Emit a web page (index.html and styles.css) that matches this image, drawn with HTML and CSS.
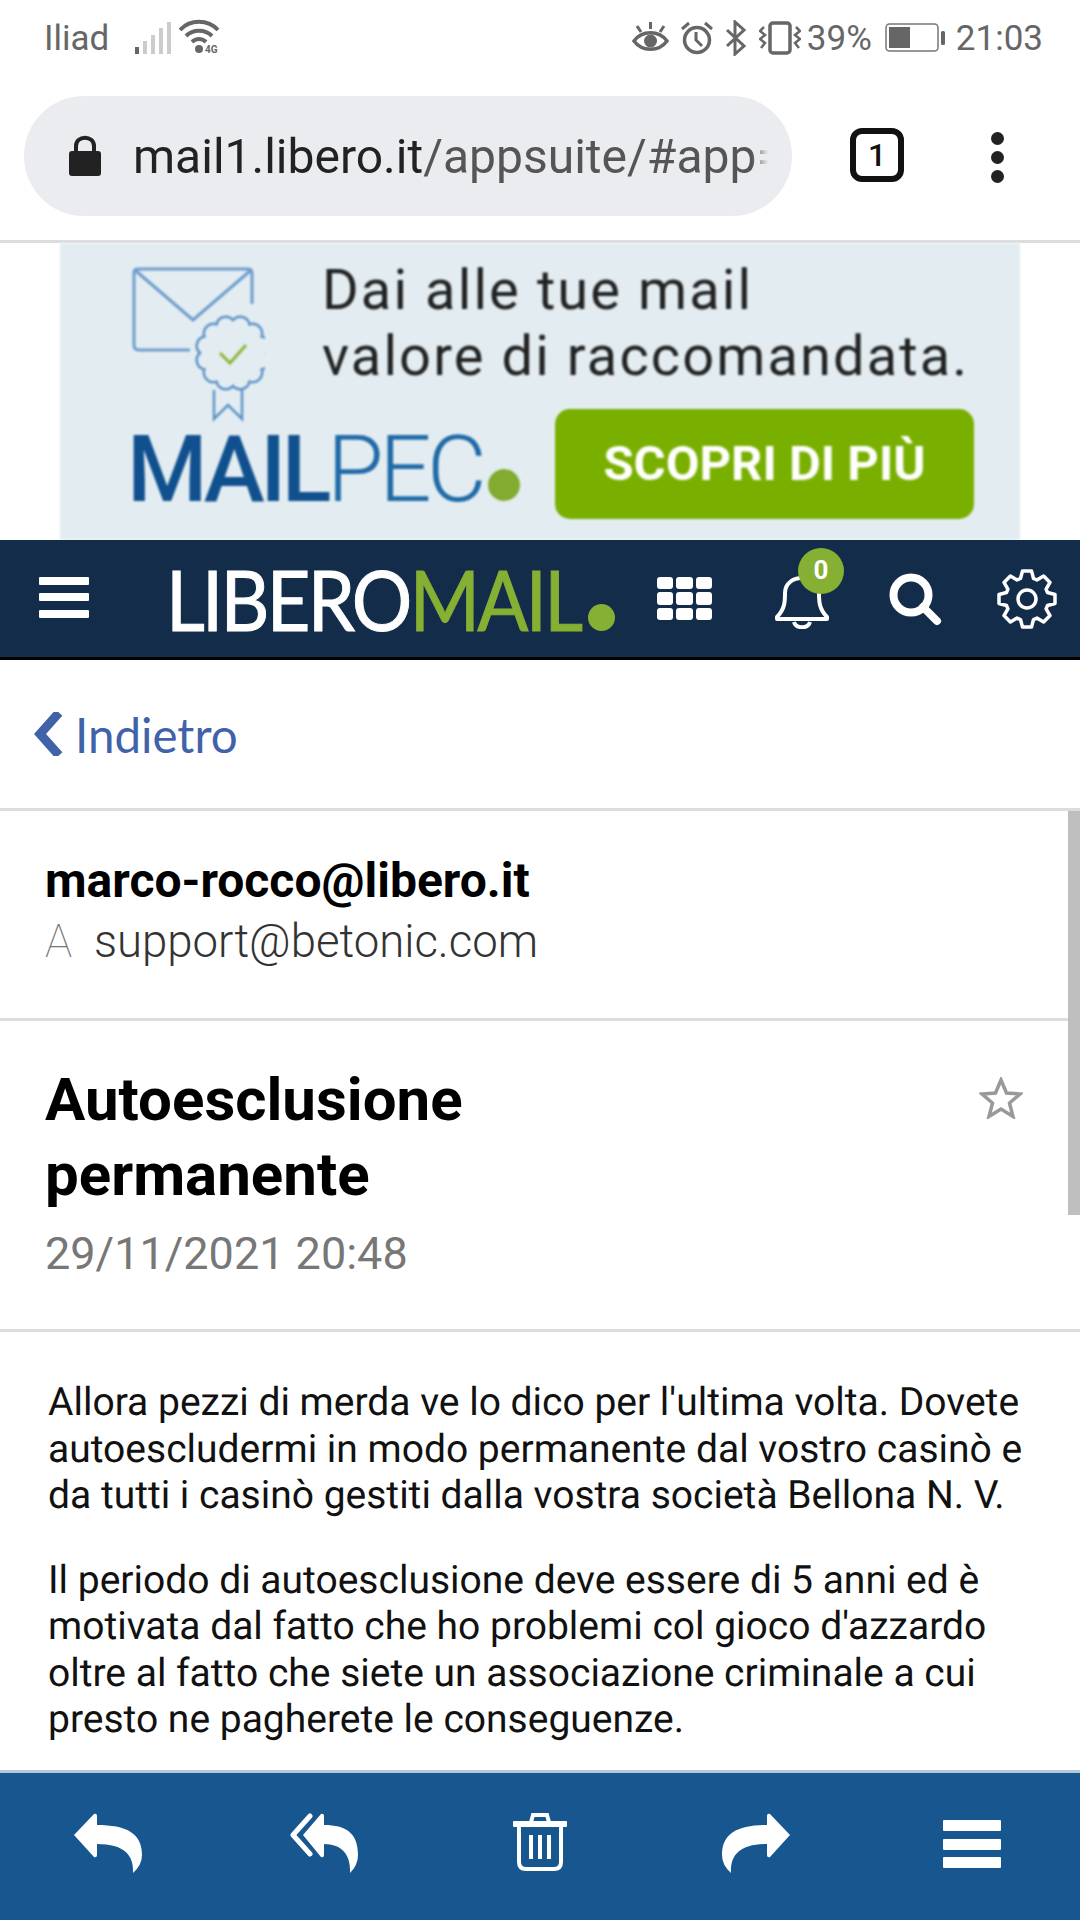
FILE: index.html
```html
<!doctype html>
<html lang="it">
<head>
    <meta charset="UTF-8">
    <meta name="viewport" content="width=device-width, initial-scale=1.0">
    <title>Autoesclusione permanente</title>
    <link rel="stylesheet" href="styles.css">
</head>
<body>
<div class="page">
    <!-- barra di stato -->
    <div class="status">
        <div class="status-left">
            <span class="carrier">Iliad</span>
            <svg class="ic-signal" width="36" height="34" viewBox="0 0 36 34">
                <rect x="0" y="26" width="4" height="7" fill="#666"/>
                <rect x="8" y="20" width="4" height="13" fill="#ccc"/>
                <rect x="16" y="14" width="4" height="19" fill="#ccc"/>
                <rect x="24" y="7" width="4" height="26" fill="#ccc"/>
                <rect x="32" y="1" width="4" height="32" fill="#ccc"/>
            </svg>
            <svg class="ic-wifi" width="44" height="38" viewBox="0 0 44 38">
                <g fill="none" stroke="#666" stroke-width="4">
                    <path d="M1 11C11 0 29 0 39 11"/>
                    <path d="M7 17C14 10 26 10 33 17"/>
                    <path d="M13 23C17 19 23 19 27 23"/>
                </g>
                <circle cx="20" cy="30" r="4" fill="#666"/>
                <text x="26" y="34" class="wifi-label">4G</text>
            </svg>
        </div>
        <div class="status-right">
            <svg width="37" height="34" viewBox="0 0 37 34">
                <path d="M2 20C10 9 27 9 35 20C27 31 10 31 2 20Z" fill="none" stroke="#666" stroke-width="3.5"/>
                <circle cx="18.500" cy="20" r="6.500" fill="#666"/>
                <path d="M18.500 1V8M5 5L9 11M32 5L28 11" stroke="#666" stroke-width="3" fill="none"/>
            </svg>
            <svg width="32" height="34" viewBox="0 0 32 34">
                <circle cx="16" cy="19" r="12.500" fill="none" stroke="#666" stroke-width="3.500"/>
                <path d="M15 11V19L21 25M1 8L8 2M31 8L24 2" fill="none" stroke="#666" stroke-width="3"/>
            </svg>
            <svg width="22" height="36" viewBox="0 0 22 36">
                <path d="M2 10L19 26L10 34V2L19 10L2 26" fill="none" stroke="#666" stroke-width="3"/>
            </svg>
            <svg width="42" height="34" viewBox="0 0 42 34">
                <rect x="11" y="2" width="20" height="30" rx="3" fill="none" stroke="#666" stroke-width="3.500"/>
                <path d="M5 6L1 10L6 14L1 18L6 22L2 27M37 6L41 10L36 14L41 18L36 22L40 27" fill="none" stroke="#666" stroke-width="2.500"/>
            </svg>
            <span class="percent">39%</span>
            <svg class="ic-battery" width="62" height="30" viewBox="0 0 62 30">
                <rect x="1" y="1" width="52" height="27" rx="3.500" fill="none" stroke="#777" stroke-width="1.500"/>
                <rect x="4" y="4" width="21" height="21" fill="#666"/>
                <rect x="56" y="8" width="4" height="14" rx="1.500" fill="#666"/>
            </svg>
            <span class="clock">21:03</span>
        </div>
    </div>

    <!-- barra indirizzi -->
    <div class="toolbar">
        <div class="urlbar">
            <svg class="ic-lock" width="34" height="42" viewBox="0 0 34 42">
                <path d="M8 18V11C8 0 26 0 26 11V18" fill="none" stroke="#222" stroke-width="4"/>
                <rect x="1" y="16" width="32" height="25" rx="3" fill="#222"/>
            </svg>
            <div class="url"><span class="url-host">mail1.libero.it</span>/appsuite/#app=</div>
        </div>
        <div class="tabs">1</div>
        <div class="dots"><i></i><i></i><i></i></div>
    </div>

    <!-- banner pubblicitario -->
    <div class="banner">
        <div class="banner-top">
            <svg class="banner-art" width="135" height="158" viewBox="0 0 135 158">
                <path d="M60 84H9Q4 84 4 79V7Q4 3 8 3H118Q122 3 122 7V38M6 5L63 54L120 5" fill="none" stroke="#6d9ccc" stroke-width="3"/>
                <path transform="translate(103 87)" d="M33 0A9.500 9.500 0 0 1 28.600 16.500A9.500 9.500 0 0 1 16.500 28.600A9.500 9.500 0 0 1 0 33A9.500 9.500 0 0 1 -16.500 28.600A9.500 9.500 0 0 1 -28.600 16.500A9.500 9.500 0 0 1 -33 0A9.500 9.500 0 0 1 -28.600 -16.500A9.500 9.500 0 0 1 -16.500 -28.600A9.500 9.500 0 0 1 0 -33A9.500 9.500 0 0 1 16.500 -28.600A9.500 9.500 0 0 1 28.600 -16.500A9.500 9.500 0 0 1 33 0Z" fill="#e3edf1" stroke="#5d93c8" stroke-width="2.500"/>
                <path d="M90 87L100 97L116 79" fill="none" stroke="#8bb63a" stroke-width="3"/>
                <path d="M84 124V153L98 139L112 153V124" fill="none" stroke="#5d93c8" stroke-width="2.500"/>
            </svg>
            <div class="banner-copy">Dai alle tue mail<br>valore di raccomandata.</div>
        </div>
        <div class="banner-bottom">
            <div class="mailpec"><b>MAIL</b>PEC<i></i></div>
            <div class="banner-btn">SCOPRI DI PIÙ</div>
        </div>
    </div>

    <!-- navigazione libero -->
    <nav class="topnav">
        <div class="burger"><i></i><i></i><i></i></div>
        <div class="logo">
            <div class="logo-text">LIBERO<span>MAIL</span></div>
            <i></i>
        </div>
        <div class="apps">
            <i></i><i></i><i></i><i></i><i></i><i></i><i></i><i></i><i></i>
        </div>
        <div class="bell">
            <svg width="54" height="60" viewBox="0 0 54 60">
                <path d="M2 48C10 40 10 32 10 24C10 4 44 4 44 24C44 32 44 40 52 48V50H2Z" fill="none" stroke="#fff" stroke-width="4" stroke-linejoin="round"/>
                <path d="M19 53C21 60 33 60 35 53" fill="none" stroke="#fff" stroke-width="4"/>
            </svg>
            <span class="badge">0</span>
        </div>
        <svg class="ic-search" width="54" height="54" viewBox="0 0 54 54">
            <circle cx="23" cy="23" r="17.500" fill="none" stroke="#fff" stroke-width="8"/>
            <path d="M35 35L49 49" stroke="#fff" stroke-width="8" stroke-linecap="round"/>
        </svg>
        <svg class="ic-gear" width="60" height="60" viewBox="0 0 60 60">
            <polygon points="23.500,9.500 25.500,2 34.500,2 36.500,9.500 39.900,10.900 46.600,7 53,13.400 49.100,20.100 50.500,23.500 58,25.500 58,34.500 50.500,36.500 49.100,39.900 53,46.600 46.600,53 39.900,49.100 36.500,50.500 34.500,58 25.500,58 23.500,50.500 20.100,49.100 13.400,53 7,46.600 10.900,39.900 9.500,36.500 2,34.500 2,25.500 9.500,23.500 10.900,20.100 7,13.400 13.400,7 20.100,10.900" fill="none" stroke="#fff" stroke-width="3.500" stroke-linejoin="round"/>
            <circle cx="30" cy="30" r="9" fill="none" stroke="#fff" stroke-width="3.500"/>
        </svg>
    </nav>

    <div class="back">
        <svg width="30" height="44" viewBox="0 0 30 44">
            <path d="M22 4L6 22L22 40" fill="none" stroke="#3f62a9" stroke-width="9" stroke-linecap="square"/>
        </svg>
        <span>Indietro</span>
    </div>

    <div class="mail">
        <div class="thumb"></div>

        <div class="sender">
            <div class="from">marco-rocco@libero.it</div>
            <div class="to"><span class="to-label">A</span>support@betonic.com</div>
        </div>

        <div class="subject">
            <div>
                <h1>Autoesclusione permanente</h1>
                <div class="date">29/11/2021 20:48</div>
            </div>
            <svg class="ic-star" width="44" height="42" viewBox="0 0 44 42">
                <path d="M22 3L27.500 16L41 17L30.500 26L34 39.500L22 32L10 39.500L13.500 26L3 17L16.500 16Z" fill="none" stroke="#999" stroke-width="3.500"/>
            </svg>
        </div>

        <div class="message">
            <p>Allora pezzi di merda ve lo dico per l'ultima volta. Dovete autoescludermi in modo permanente dal vostro casinò e da tutti i casinò gestiti dalla vostra società Bellona N. V.</p>
            <p>Il periodo di autoesclusione deve essere di 5 anni ed è motivata dal fatto che ho problemi col gioco d'azzardo oltre al fatto che siete un associazione criminale a cui presto ne pagherete le conseguenze.</p>
        </div>
    </div>

    <!-- azioni -->
    <div class="actions">
        <svg width="68" height="60" viewBox="0 0 68 60">
            <path d="M0 22L20 1Q23 0 23 3V12C52 12 68 20 68 42Q68 52 59 60C60 42 50 31 23 31V42Q23 45 20 44Z" fill="#fff"/>
        </svg>
        <svg width="68" height="60" viewBox="0 0 68 60">
            <path d="M20 3L3 22L20 41" fill="none" stroke="#fff" stroke-width="5" stroke-linejoin="round" stroke-linecap="round"/>
            <path d="M13 22L31 1Q34 0 34 3V12C56 12 68 20 68 42Q68 52 60 60C61 42 52 31 34 31V42Q34 45 31 44Z" fill="#fff"/>
        </svg>
        <svg width="54" height="58" viewBox="0 0 54 58">
            <path d="M18 9L20 2H34L36 9" fill="none" stroke="#fff" stroke-width="4"/>
            <rect x="0" y="8" width="54" height="6" rx="1" fill="#fff"/>
            <path d="M6 13V49Q6 56 13 56H41Q48 56 48 49V13" fill="none" stroke="#fff" stroke-width="4"/>
            <path d="M18 22V46M27 22V46M36 22V46" stroke="#fff" stroke-width="4" fill="none"/>
        </svg>
        <svg width="68" height="60" viewBox="0 0 68 60">
            <path d="M68 22L48 1Q45 0 45 3V12C16 12 0 20 0 42Q0 52 9 60C8 42 18 31 45 31V42Q45 45 48 44Z" fill="#fff"/>
        </svg>
        <div class="action-menu"><i></i><i></i><i></i></div>
    </div>
</div>
</body>
</html>
```

FILE: styles.css
```css
* {
    margin: 0;
    padding: 0;
    box-sizing: border-box;
}

body {
    font-family: Roboto, "Liberation Sans", sans-serif;
    background: #fff;
}

i {
    display: block;
}

.page {
    width: 1080px;
    height: 1920px;
    display: flex;
    flex-direction: column;
    overflow: hidden;
}

/* status */
.status {
    height: 76px;
    padding: 0 37px 0 44px;
    display: flex;
    justify-content: space-between;
    align-items: center;
    color: #666;
    font-size: 35px;
}

.status-left,
.status-right {
    display: flex;
    align-items: center;
}

.ic-signal {
    margin-left: 26px;
}

.ic-wifi {
    margin-left: 8px;
}

.wifi-label {
    font-size: 10px;
    font-weight: 700;
    fill: #666;
}

.status-right {
    gap: 12px;
}

.percent {
    margin-left: -6px;
}

.ic-battery {
    margin-left: 1px;
}

.clock {
    margin-left: -3px;
}

/* address bar */
.toolbar {
    height: 167px;
    padding: 20px 0 0 24px;
    display: flex;
    align-items: flex-start;
    border-bottom: 3px solid #ddd;
}

.urlbar {
    width: 768px;
    height: 120px;
    padding: 0 24px 0 44px;
    background: #ebecf0;
    border-radius: 60px;
    display: flex;
    align-items: center;
}

.ic-lock {
    flex: none;
    margin-right: 31px;
}

.url {
    font-size: 48px;
    color: #555;
    white-space: nowrap;
    overflow: hidden;
    -webkit-mask-image: linear-gradient(to left, transparent 0, #000 16px);
    mask-image: linear-gradient(to left, transparent 0, #000 16px);
}

.url-host {
    color: #222;
}

.tabs {
    width: 54px;
    height: 54px;
    margin: 32px 0 0 58px;
    border: 6px solid #111;
    border-radius: 12px;
    font-size: 32px;
    font-weight: 500;
    line-height: 42px;
    text-align: center;
    color: #111;
}

.dots {
    margin: 36px 0 0 87px;
    display: flex;
    flex-direction: column;
    gap: 6px;
}

.dots i {
    width: 13px;
    height: 13px;
    border-radius: 50%;
    background: #222;
}

/* banner */
.banner {
    width: 960px;
    height: 297px;
    margin: 0 auto;
    padding: 25px 46px 21px 72px;
    background: #e3edf1;
    display: flex;
    flex-direction: column;
    justify-content: space-between;
    filter: blur(0.8px);
}

.banner-top {
    display: flex;
    height: 140px;
}

.banner-art {
    flex: none;
    margin-left: -2px;
    margin-top: -2px;
}

.banner-copy {
    margin: -11px 0 0 57px;
    font-size: 56px;
    line-height: 66px;
    color: #222;
    letter-spacing: 2.1px;
    white-space: nowrap;
}

.banner-bottom {
    display: flex;
    justify-content: space-between;
    align-items: flex-end;
}

.mailpec {
    display: flex;
    align-items: baseline;
    margin: 0 0 9px -5px;
    font-size: 92px;
    line-height: 80px;
    letter-spacing: -4.5px;
    color: #1f6aa8;
    font-weight: 300;
}

.mailpec b {
    font-weight: 500;
    color: #10508f;
}

.mailpec i {
    width: 32px;
    height: 32px;
    margin-left: 6px;
    border-radius: 50%;
    background: #82ab2f;
}

.banner-btn {
    width: 419px;
    height: 110px;
    border-radius: 15px;
    background: #79b000;
    color: #fff;
    font-size: 49px;
    font-weight: 700;
    line-height: 110px;
    text-align: center;
}

/* top nav */
.topnav {
    height: 120px;
    padding-left: 39px;
    background: #122c4a;
    border-bottom: 3px solid #000;
    display: flex;
    align-items: center;
    position: relative;
}

.burger {
    width: 50px;
    height: 41px;
    display: flex;
    flex-direction: column;
    justify-content: space-between;
    margin: -3px 0 0 0;
}

.burger i {
    height: 8px;
    background: #fff;
    border-radius: 1px;
}

.logo {
    display: flex;
    align-items: baseline;
    margin-left: 77px;
    width: 491px;
}

.logo-text {
    width: 423px;
    font-family: Lato, sans-serif;
    font-size: 84px;
    line-height: 90px;
    letter-spacing: -3px;
    color: #fff;
    white-space: nowrap;
    transform: scaleX(.9);
    transform-origin: left;
    -webkit-text-stroke: 1px currentColor;
}

.logo-text span {
    color: #86b033;
}

.logo i {
    width: 27px;
    height: 27px;
    margin-left: -1px;
    border-radius: 50%;
    background: #86b033;
}

.apps {
    width: 55px;
    height: 43px;
    display: grid;
    grid-template-columns: repeat(3, 1fr);
    gap: 3px;
}

.apps i {
    background: #fff;
    border-radius: 3px;
}

.bell {
    position: relative;
    margin-left: 63px;
    height: 60px;
}

.badge {
    position: absolute;
    left: 23px;
    top: -21px;
    width: 46px;
    height: 46px;
    border-radius: 50%;
    background: #86b033;
    color: #fff;
    font-size: 26px;
    font-weight: 700;
    line-height: 44px;
    text-align: center;
}

.ic-search {
    margin-left: 59px;
}

.ic-gear {
    margin-left: 55px;
}

/* back */
.back {
    height: 151px;
    padding-left: 34px;
    border-bottom: 3px solid #ddd;
    display: flex;
    align-items: center;
    color: #3f62a9;
    font-family: Lato, sans-serif;
    font-size: 47.5px;
}

.back span {
    margin-left: 11px;
}

/* mail */
.mail {
    flex: 1;
    position: relative;
    display: flex;
    flex-direction: column;
    overflow: hidden;
}

.thumb {
    position: absolute;
    top: 0;
    right: 0;
    width: 12px;
    height: 404px;
    background: #bfbfbf;
}

.sender {
    flex: none;
    height: 210px;
    padding: 41px 45px 0;
    border-bottom: 3px solid #ddd;
}

.from {
    font-size: 48px;
    font-weight: 700;
    line-height: 58px;
    color: #000;
}

.to {
    margin-top: 2px;
    font-size: 45.500px;
    font-weight: 300;
    line-height: 60px;
    color: #333;
}

.to-label {
    display: inline-block;
    width: 49px;
    font-weight: 100;
    color: #777;
}

.subject {
    flex: none;
    height: 311px;
    padding: 41px 45px 0;
    border-bottom: 3px solid #ddd;
    display: flex;
    justify-content: space-between;
}

h1 {
    width: 500px;
    font-size: 60px;
    font-weight: 700;
    line-height: 75px;
    color: #000;
}

.date {
    margin-top: 12px;
    font-size: 45px;
    line-height: 60px;
    color: #777;
}

.ic-star {
    margin: 15px 12px 0 0;
}

.message {
    padding: 47px 48px 0;
    font-size: 39px;
    line-height: 46.500px;
    color: #111;
    text-rendering: geometricPrecision;
}

.message p {
    margin-bottom: 38px;
}

/* actions */
.actions {
    height: 150px;
    padding-top: 40px;
    background: #17568f;
    border-top: 3px solid #b5c8da;
    display: grid;
    grid-template-columns: repeat(5, 1fr);
    justify-items: center;
    align-items: start;
}

.action-menu {
    width: 58px;
    height: 48px;
    margin-top: 7px;
    display: flex;
    flex-direction: column;
    justify-content: space-between;
}

.action-menu i {
    height: 11px;
    border-radius: 1px;
    background: #fff;
}
```
